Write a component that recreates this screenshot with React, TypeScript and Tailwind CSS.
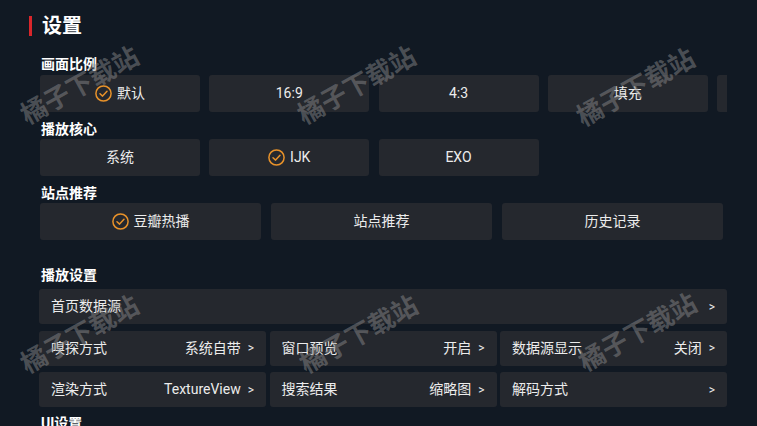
import React from 'react';

const font = { fontFamily: 'Roboto, "Noto Sans CJK SC", sans-serif' };

const CheckIcon: React.FC = () => (
  <svg width="17" height="17" viewBox="0 0 17 17" fill="none" className="shrink-0">
    <circle cx="8.5" cy="8.5" r="7.6" stroke="#e8922a" strokeWidth="1.5" />
    <path d="M5 8.7 L7.6 11.1 L12 6.3" stroke="#e8922a" strokeWidth="1.5" strokeLinecap="round" strokeLinejoin="round" />
  </svg>
);

const Option: React.FC<{ label: string; checked?: boolean; wide?: boolean }> = ({ label, checked, wide }) => (
  <div
    className={`${wide ? 'w-[221px]' : 'w-[160px]'} h-[37px] shrink-0 rounded-[3px] bg-[#25282e] flex items-center justify-center gap-[5px] text-[14px] text-[#ececec]`}
  >
    {checked && <CheckIcon />}
    <span>{label}</span>
  </div>
);

const Label: React.FC<{ text: string; className?: string }> = ({ text, className }) => (
  <div className={`h-[20px] leading-[20px] pl-[1px] text-[14px] font-bold text-white ${className ?? ''}`}>{text}</div>
);

const Row: React.FC<{ title: string; value?: string }> = ({ title, value }) => (
  <div className="h-[35px] rounded-[3px] bg-[#25282e] flex items-center justify-between pl-[12px] pr-[12px] text-[14px] text-[#ececec]">
    <span>{title}</span>
    <span className="flex items-center">
      {value && <span>{value}</span>}
      <span className="ml-[7px] text-[12px]">&gt;</span>
    </span>
  </div>
);

// diagonal site watermark laid over the page
const Watermark: React.FC<{ x: number; y: number }> = ({ x, y }) => (
  <div
    className="absolute pointer-events-none -translate-x-1/2 -translate-y-1/2 rotate-[-29deg] whitespace-nowrap text-[26px] font-bold text-[rgba(140,140,140,0.48)]"
    style={{ left: x, top: y }}
  >
    橘子下载站
  </div>
);

export default function App() {
  return (
    <div className="relative w-[757px] h-[426px] overflow-hidden bg-[#111923]" style={font}>
      <div className="pl-[40px] pt-[14px] w-[727px]">
        <div className="flex items-center gap-[10px] -ml-[11px] h-[24px]">
          <div className="w-[3px] h-[20px] bg-[#d9262b]" />
          <h1 className="text-[20px] font-bold text-white leading-[24px]">设置</h1>
        </div>

        <Label text="画面比例" className="mt-[16px]" />
        <div className="mt-[1px] flex gap-[9.25px] overflow-hidden">
          <Option label="默认" checked />
          <Option label="16:9" />
          <Option label="4:3" />
          <Option label="填充" />
          <Option label="原始" />
        </div>

        <Label text="播放核心" className="mt-[7px]" />
        <div className="flex gap-[9.25px]">
          <Option label="系统" />
          <Option label="IJK" checked />
          <Option label="EXO" />
        </div>

        <Label text="站点推荐" className="mt-[7px]" />
        <div className="flex gap-[10px]">
          <Option label="豆瓣热播" checked wide />
          <Option label="站点推荐" wide />
          <Option label="历史记录" wide />
        </div>

        <Label text="播放设置" className="mt-[25px]" />
        <div className="-ml-[1px] mt-[4px] flex flex-col gap-[6.5px]">
          <Row title="首页数据源" />
          <div className="grid grid-cols-3 gap-x-[3.5px] gap-y-[6.5px]">
            <Row title="嗅探方式" value="系统自带" />
            <Row title="窗口预览" value="开启" />
            <Row title="数据源显示" value="关闭" />
            <Row title="渲染方式" value="TextureView" />
            <Row title="搜索结果" value="缩略图" />
            <Row title="解码方式" />
          </div>
        </div>

        <Label text="UI设置" className="mt-[6px]" />
      </div>

      <Watermark x={80} y={86} />
      <Watermark x={357} y={86} />
      <Watermark x={636} y={88} />
      <Watermark x={80} y={335} />
      <Watermark x={359} y={335} />
      <Watermark x={638} y={333} />
    </div>
  );
}
